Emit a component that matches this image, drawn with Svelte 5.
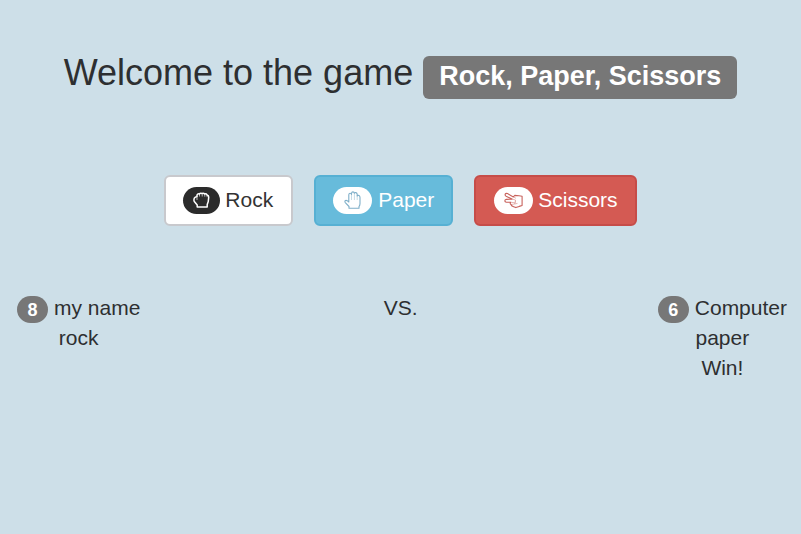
<script>
  const choices = [
    { id: 'rock', label: 'Rock' },
    { id: 'paper', label: 'Paper' },
    { id: 'scissors', label: 'Scissors' }
  ];
</script>

<main>
  <h1>Welcome to the game <span class="label">Rock, Paper, Scissors</span></h1>

  <div class="choices">
    {#each choices as c}
      <button class={c.id}>
        <span class="icon">
          {#if c.id === 'rock'}
            <svg width="17" height="17" viewBox="0 0 17 17">
              <path d="M4.2 15V13L1.3 9.5Q.6 8 1.3 6.2Q2.2 4.6 4 4.4V3Q4.6 1.6 6.3 1.9Q7.4.8 9 1.5Q10.6.9 11.7 1.9Q13.4 1.7 14.2 3Q15.8 3.5 15.7 5.3L15.2 9.8L14.2 12.4V15Z" />
              <path class="fine" d="M4 4.4V8M6.5 2V4.5M9.2 1.7V4.5M11.8 2V4.7M14.1 3V5.2" />
            </svg>
          {:else if c.id === 'paper'}
            <svg width="18" height="20" viewBox="0 0 18 20">
              <path d="M5 17.2V15.5L1.3 11.6Q.4 10.2 1.5 9.5Q2.7 8.9 4.8 11V3.7Q4.9 2.2 6.1 2.2Q7.3 2.2 7.5 3.4V2.3Q7.7.9 8.9.9Q10.2.9 10.4 2.3Q10.8 1.3 11.9 1.6Q13.1 1.9 13.2 3.3V4.9Q13.9 4 15 4.5Q16 5 16 6.4V12.4Q16 14.3 15 15.6V17.2Z" />
              <path class="fine" d="M7.5 3.4V9M10.4 2.3V9M13.2 4.5V9" />
            </svg>
          {:else}
            <svg width="20" height="18" viewBox="0 0 20 18">
              <path d="M9.3 4.9L3.5 1.6Q1.9 1 1.2 2.1Q.7 3.5 2.1 4.3L8 7.1L2.3 7.4Q.8 7.6.8 8.9Q.9 10.2 2.4 10.2H6.6Q5.7 11.8 7 12.5Q7.4 14 9 14.4L11.8 15.6L15.2 14.4L18.1 13.5V4.2L15 3.8L10.8 3.4Z" />
              <path class="fine" d="M9.3 4.9L12 6.3M8 7.1L11.5 8V10L9.2 10.6L6.6 10.2M7 12.5L10.5 12L11.5 10M10.5 12L13.5 11.4" />
            </svg>
          {/if}
        </span><span class="text">{c.label}</span>
      </button>
    {/each}
  </div>

  <div class="scores">
    <section class="player">
      <div><span class="badge">8</span>my name</div>
      <div>rock</div>
    </section>
    <section class="versus">VS.</section>
    <section class="computer">
      <div><span class="badge">6</span>Computer</div>
      <div>paper</div>
      <div>Win!</div>
    </section>
  </div>
</main>

<style>
  :global(body) {
    background: #cddfe8;
  }
  main {
    box-sizing: border-box;
    height: 534px;
    padding-top: 53px;
    overflow: hidden;
    font-family: "Liberation Sans", Arial, sans-serif;
    font-size: 21px;
    line-height: 30px;
    color: #2d2f31;
  }
  h1 {
    margin: 0;
    height: 40px;
    font-size: 36px;
    line-height: 40px;
    font-weight: 400;
    text-align: center;
    white-space: nowrap;
  }
  .label {
    display: inline-block;
    box-sizing: border-box;
    height: 43px;
    padding: 7px 16px 0;
    border-radius: 6px;
    background: #777;
    color: #fff;
    font-size: 27px;
    font-weight: 700;
    line-height: 27px;
    vertical-align: baseline;
  }
  .choices {
    display: flex;
    justify-content: center;
    gap: 21px;
    margin-top: 82px;
  }
  button {
    display: flex;
    align-items: center;
    box-sizing: border-box;
    height: 51px;
    padding: 0 17px;
    border: 2px solid;
    border-radius: 6px;
    font: inherit;
    gap: 6px;
  }
  .text {
    padding-bottom: 2px;
  }
  .rock .text {
    margin-left: -1px;
    margin-right: 1px;
  }
  .icon {
    display: flex;
    align-items: center;
    justify-content: center;
    width: 39px;
    height: 27px;
    border-radius: 14px;
    background: #fff;
  }
  svg {
    fill: none;
    stroke: currentColor;
    stroke-width: 1.1;
    stroke-linejoin: round;
  }
  .fine {
    stroke-width: 0.7;
    opacity: 0.65;
  }
  .rock {
    background: #fff;
    border-color: #c8c9cd;
    color: #333;
  }
  .rock .icon {
    width: 37px;
    background: #2b2b2b;
    color: #fff;
  }
  .rock svg {
    stroke-width: 1.5;
  }
  .rock .fine {
    stroke-width: 1;
  }
  .paper {
    background: #67bbdb;
    border-color: #56b0d3;
    color: #fff;
  }
  .paper .icon {
    color: #7fafc9;
  }
  .scissors {
    background: #d45a53;
    border-color: #c64c48;
    color: #fff;
  }
  .scissors .icon {
    margin-left: 1px;
    margin-right: -1px;
    color: #c8625c;
  }
  .scores {
    display: flex;
    justify-content: space-between;
    margin-top: 67px;
    padding: 0 14px 0 17px;
    text-align: center;
  }
  section {
    flex: none;
  }
  .versus {
    padding-left: 3px;
  }
  .scores div {
    height: 30px;
  }
  .scores div:first-child {
    display: flex;
    align-items: center;
  }
  .badge {
    width: 31px;
    height: 27px;
    margin: 3px 6px 0 0;
    border-radius: 14px;
    background: #777;
    color: #fff;
    font-size: 18px;
    font-weight: 700;
    line-height: 28px;
  }
</style>
